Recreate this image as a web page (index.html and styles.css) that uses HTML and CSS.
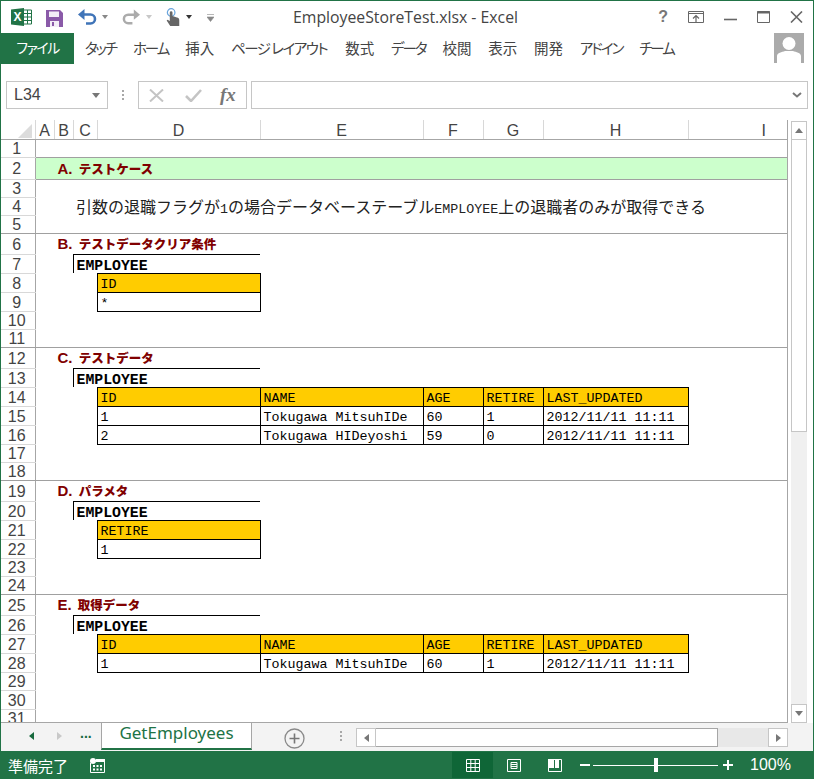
FILE: index.html
```html
<!DOCTYPE html>
<html lang="ja">
<head>
  <meta charset="UTF-8">
  <title>EmployeeStoreTest.xlsx - Excel</title>
  <link rel="stylesheet" href="styles.css">
</head>
<body>
<div class="window">

  <header class="titlebar">
    <div class="qat">
      <svg class="ic-excel" width="21" height="18" viewBox="0 0 21 18">
        <path d="M12 2h8.500v14H12z" fill="#fff" stroke="#217346"/>
        <path d="M13 5.500h7M13 9h7M13 12.500h7M16.500 2v14" stroke="#217346"/>
        <path d="M0 1.500 13 0v18L0 16.500z" fill="#217346"/>
        <text x="2.500" y="13" class="ic-excel-x">X</text>
      </svg>
      <svg class="ic-save" width="17" height="17" viewBox="0 0 17 17">
        <path d="M0 0h14l3 3v14H0z" fill="#8a5aa8"/>
        <path d="M3 1.500h10v5.500H3z" fill="#f2edf6"/>
        <path d="M4 11h9v6H4z" fill="#f2edf6"/>
        <path d="M6 12h2v4H6z" fill="#8a5aa8"/>
      </svg>
      <svg class="ic-undo" width="19" height="17" viewBox="0 0 19 17">
        <path d="M6 5.500h6.500a4.500 4.500 0 0 1 0 9H8" fill="none" stroke="#3f74b8" stroke-width="2.600"/>
        <path d="M0 5.500 6.500 0v11z" fill="#3f74b8"/>
      </svg>
      <span class="caret"></span>
      <svg class="ic-redo" width="18" height="17" viewBox="0 0 19 17">
        <path d="M13 5.500H6.500a4.500 4.500 0 0 0 0 9H11" fill="none" stroke="#ababab" stroke-width="2.600"/>
        <path d="M19 5.500 12.500 0v11z" fill="#ababab"/>
      </svg>
      <span class="caret caret-light"></span>
      <svg class="ic-touch" width="15" height="18" viewBox="0 0 15 20">
        <circle cx="6" cy="5" r="4.200" fill="none" stroke="#6aa5dc" stroke-width="1.400"/>
        <path d="M4.500 5a1.500 1.500 0 0 1 3 0v4l5 1.500c1.500.5 2.500 1 2.500 3V20H5l-4-6 1-1 2.500 1.500z" fill="#666"/>
      </svg>
      <span class="caret caret-dark"></span>
      <svg class="ic-more" width="7" height="8" viewBox="0 0 7 8">
        <path d="M0 .5h7M0 3h7L3.500 7.500z" fill="#888" stroke="#888" stroke-width=".6"/>
      </svg>
    </div>
    <div class="title">EmployeeStoreTest.xlsx - Excel</div>
    <div class="controls">
      <span class="help">?</span>
      <svg width="16" height="12" viewBox="0 0 16 12">
        <path d="M.5.500h15v11H.5z" fill="none" stroke="#666"/>
        <path d="M0 2.500h16M8 11V5M5 7.500 8 4.500l3 3" fill="none" stroke="#666" stroke-width="1.200"/>
      </svg>
      <svg width="13" height="12" viewBox="0 0 13 12"><path d="M0 8.500h13" stroke="#666" stroke-width="1.600"/></svg>
      <svg width="13" height="12" viewBox="0 0 13 12">
        <path d="M.5.500h12v11H.5z" fill="none" stroke="#666"/>
        <path d="M0 1.500h13" stroke="#666" stroke-width="2"/>
      </svg>
      <svg width="13" height="12" viewBox="0 0 13 12"><path d="M1 .5 12 11.500M12 .5 1 11.500" stroke="#666" stroke-width="1.600"/></svg>
    </div>
  </header>

  <nav class="ribbon">
    <a class="file-tab">ファイル</a>
    <a class="kana">タッチ</a>
    <a class="kana">ホーム</a>
    <a>挿入</a>
    <a class="kana-wide">ページ レイアウト</a>
    <a>数式</a>
    <a class="kana">データ</a>
    <a>校閲</a>
    <a>表示</a>
    <a>開発</a>
    <a class="kana">アドイン</a>
    <a class="kana">チーム</a>
    <svg class="avatar" width="30" height="30" viewBox="0 0 30 30">
      <path d="M0 0h30v30H0z" fill="#ababab"/>
      <circle cx="15" cy="10.500" r="6.500" fill="#fff"/>
      <path d="M3 30v-7c0-3 5-4 8-5h8c3 1 8 2 8 5v7z" fill="#fff"/>
    </svg>
  </nav>

  <div class="formula-bar">
    <div class="name-box"><span>L34</span><i class="tri-down"></i></div>
    <div class="grip"></div>
    <div class="fx-group">
      <svg width="15" height="13" viewBox="0 0 15 13"><path d="M1 .5 14 12.500M14 .5 1 12.500" stroke="#c4c4c4" stroke-width="2"/></svg>
      <svg width="17" height="13" viewBox="0 0 17 13"><path d="M1 7l5 5L16 1" fill="none" stroke="#c4c4c4" stroke-width="2.600"/></svg>
      <span class="fx">fx</span>
    </div>
    <div class="formula-input">
      <svg width="10" height="6" viewBox="0 0 10 6"><path d="M1 1l4 3.500L9 1" fill="none" stroke="#777" stroke-width="2"/></svg>
    </div>
  </div>

  <main class="sheet-area">
    <div class="grid-wrap">
      <table class="grid">
        <colgroup>
          <col class="c-head"><col class="c-a"><col class="c-b"><col class="c-c"><col class="c-d">
          <col class="c-e"><col class="c-f"><col class="c-g"><col class="c-h"><col class="c-i">
        </colgroup>
        <thead>
          <tr class="col-heads">
            <th class="corner"><i></i></th>
            <th>A</th><th>B</th><th>C</th><th>D</th><th>E</th><th>F</th><th>G</th><th>H</th><th class="col-i">I</th>
          </tr>
        </thead>
        <tbody>
          <tr class="h18"><th>1</th><td colspan="9"></td></tr>
          <tr class="h22"><th>2</th><td colspan="9" class="case-head"><span class="sec-title">A. <b>テストケース</b></span></td></tr>
          <tr class="h18"><th>3</th><td colspan="9"></td></tr>
          <tr class="h18"><th>4</th><td colspan="2"></td><td colspan="7" class="case-text">引数の退職フラグが<span class="mono">1</span>の場合データベーステーブル<span class="mono">EMPLOYEE</span>上の退職者のみが取得できる</td></tr>
          <tr class="h18 sec-end"><th>5</th><td colspan="9"></td></tr>

          <tr class="h21"><th>6</th><td colspan="9"><span class="sec-title">B. <b>テストデータクリア条件</b></span></td></tr>
          <tr class="h19"><th>7</th><td colspan="2"></td><td colspan="2" class="tbl-name">EMPLOYEE</td><td colspan="5"></td></tr>
          <tr class="h19"><th>8</th><td colspan="3"></td><td class="cell hd">ID</td><td colspan="5"></td></tr>
          <tr class="h19"><th>9</th><td colspan="3"></td><td class="cell">*</td><td colspan="5"></td></tr>
          <tr class="h18"><th>10</th><td colspan="9"></td></tr>
          <tr class="h18 sec-end"><th>11</th><td colspan="9"></td></tr>

          <tr class="h21"><th>12</th><td colspan="9"><span class="sec-title">C. <b>テストデータ</b></span></td></tr>
          <tr class="h19"><th>13</th><td colspan="2"></td><td colspan="2" class="tbl-name">EMPLOYEE</td><td colspan="5"></td></tr>
          <tr class="h19"><th>14</th><td colspan="3"></td><td class="cell hd">ID</td><td class="cell hd">NAME</td><td class="cell hd">AGE</td><td class="cell hd">RETIRE</td><td class="cell hd">LAST_UPDATED</td><td></td></tr>
          <tr class="h19"><th>15</th><td colspan="3"></td><td class="cell">1</td><td class="cell">Tokugawa MitsuhIDe</td><td class="cell">60</td><td class="cell">1</td><td class="cell">2012/11/11 11:11</td><td></td></tr>
          <tr class="h19"><th>16</th><td colspan="3"></td><td class="cell">2</td><td class="cell">Tokugawa HIDeyoshi</td><td class="cell">59</td><td class="cell">0</td><td class="cell">2012/11/11 11:11</td><td></td></tr>
          <tr class="h18"><th>17</th><td colspan="9"></td></tr>
          <tr class="h18 sec-end"><th>18</th><td colspan="9"></td></tr>

          <tr class="h21"><th>19</th><td colspan="9"><span class="sec-title">D. <b>パラメタ</b></span></td></tr>
          <tr class="h19"><th>20</th><td colspan="2"></td><td colspan="2" class="tbl-name">EMPLOYEE</td><td colspan="5"></td></tr>
          <tr class="h19"><th>21</th><td colspan="3"></td><td class="cell hd">RETIRE</td><td colspan="5"></td></tr>
          <tr class="h19"><th>22</th><td colspan="3"></td><td class="cell">1</td><td colspan="5"></td></tr>
          <tr class="h18"><th>23</th><td colspan="9"></td></tr>
          <tr class="h18 sec-end"><th>24</th><td colspan="9"></td></tr>

          <tr class="h21"><th>25</th><td colspan="9"><span class="sec-title">E. <b>取得データ</b></span></td></tr>
          <tr class="h19"><th>26</th><td colspan="2"></td><td colspan="2" class="tbl-name">EMPLOYEE</td><td colspan="5"></td></tr>
          <tr class="h19"><th>27</th><td colspan="3"></td><td class="cell hd">ID</td><td class="cell hd">NAME</td><td class="cell hd">AGE</td><td class="cell hd">RETIRE</td><td class="cell hd">LAST_UPDATED</td><td></td></tr>
          <tr class="h19"><th>28</th><td colspan="3"></td><td class="cell">1</td><td class="cell">Tokugawa MitsuhIDe</td><td class="cell">60</td><td class="cell">1</td><td class="cell">2012/11/11 11:11</td><td></td></tr>
          <tr class="h18"><th>29</th><td colspan="9"></td></tr>
          <tr class="h19"><th>30</th><td colspan="9"></td></tr>
          <tr class="h18"><th>31</th><td colspan="9"></td></tr>
        </tbody>
      </table>
    </div>
    <div class="vscroll">
      <div class="sb-btn"><i class="tri-up"></i></div>
      <div class="sb-thumb"></div>
      <div class="sb-track"></div>
      <div class="sb-btn"><i class="tri-down"></i></div>
    </div>
  </main>

  <div class="tabs-bar">
    <div class="tab-nav">
      <i class="arrow-left green"></i>
      <i class="arrow-right pale"></i>
      <span class="tab-dots">...</span>
    </div>
    <div class="sheet-tab">GetEmployees</div>
    <div class="add-sheet">
      <svg width="21" height="21" viewBox="0 0 21 21">
        <circle cx="10.500" cy="10.500" r="9.500" fill="none" stroke="#8a8a8a" stroke-width="1.300"/>
        <path d="M10.500 5.500v10M5.500 10.500h10" stroke="#777" stroke-width="1.600"/>
      </svg>
    </div>
    <div class="grip tabs-grip"></div>
    <div class="hscroll">
      <div class="hs-btn"><i class="arrow-left"></i></div>
      <div class="hs-thumb"></div>
      <div class="hs-track"></div>
      <div class="hs-btn"><i class="arrow-right"></i></div>
    </div>
  </div>

  <footer class="statusbar">
    <span class="ready">準備完了</span>
    <svg class="ic-macro" width="15" height="15" viewBox="0 0 15 15">
      <path d="M2.500 2.500H14.500V14.500H.5V5" fill="none" stroke="#fff"/>
      <circle cx="3" cy="3" r="3" fill="#fff"/>
      <path d="M6 1h9v3H6zM3 7h2v2H3zM6.500 7h2v2h-2zM10 7h2v2h-2zM3 10.500h2v2H3zM6.500 10.500h2v2h-2zM10 10.500h2v2h-2z" fill="#fff"/>
    </svg>
    <div class="views">
      <div class="view active">
        <svg width="14" height="13" viewBox="0 0 14 13"><path d="M.5.500h13v12H.5zM.5 4.500h13M.5 8.500h13M4.800.5v12M9.200.5v12" fill="none" stroke="#fff"/></svg>
      </div>
      <div class="view">
        <svg width="14" height="13" viewBox="0 0 14 13"><path d="M.5.500h13v12H.5zM4 3.500h6v6H4zM4 5.500h6M4 7.500h6" fill="none" stroke="#fff"/></svg>
      </div>
      <div class="view">
        <svg width="14" height="13" viewBox="0 0 14 13"><path d="M.5.500h13v12H.5z" fill="none" stroke="#fff"/><path d="M0 0h6v9H0zM7 0h4v9H7z" fill="#fff"/></svg>
      </div>
    </div>
    <div class="zoom">
      <span class="zoom-btn minus"></span>
      <div class="slider"><i></i></div>
      <span class="zoom-btn plus"></span>
      <span class="zoom-val">100%</span>
    </div>
  </footer>

</div>
</body>
</html>
```

FILE: styles.css
```css
* {
  box-sizing: border-box;
}
html, body {
  margin: 0;
  padding: 0;
  background: #fff;
}
body {
  font-family: "Noto Sans", "Noto Sans CJK JP", sans-serif;
  color: #444;
}
.window {
  width: 814px;
  height: 779px;
  border: 1px solid #217346;
  border-bottom: none;
  display: flex;
  flex-direction: column;
  overflow: hidden;
}

/* title bar */
.titlebar {
  height: 32px;
  display: flex;
  align-items: center;
  flex: none;
}
.qat, .controls {
  flex: 1 1 0;
  display: flex;
  align-items: center;
}
.qat {
  padding-left: 10px;
}
.ic-save { margin-left: 14px; margin-top: 2px; }
.ic-undo { margin-left: 15px; }
.ic-redo { margin-left: 14px; }
.ic-touch { margin-left: 13px; margin-top: -1px; }
.ic-more { margin-left: 15px; margin-top: 2px; }
.ic-excel-x {
  font: bold 12px "Liberation Sans", sans-serif;
  fill: #fff;
}
.caret {
  width: 0;
  height: 0;
  margin-left: 5px;
  border: 3.500px solid transparent;
  border-top: 4px solid #888;
  border-bottom: none;
}
.caret-light { border-top-color: #c8c8c8; margin-left: 6px; }
.caret-dark { border-top-color: #333; margin-left: 6px; }
.title {
  font-family: "Open Sans", sans-serif;
  font-size: 15.800px;
  color: #444;
  white-space: nowrap;
  flex: none;
  margin-left: -3px;
}
.controls {
  justify-content: flex-end;
  gap: 20px;
  padding-right: 10px;
}
.help {
  font: bold 16px "Liberation Sans", sans-serif;
  color: #777;
}

/* ribbon tabs */
.ribbon {
  height: 31px;
  flex: none;
  display: flex;
  align-items: center;
  gap: 16.800px;
  position: relative;
  font-family: "Noto Sans CJK JP", sans-serif;
  font-size: 14.500px;
  font-feature-settings: "palt";
  color: #444;
}
.ribbon a {
  white-space: nowrap;
  margin-top: -2px;
}
.ribbon .kana {
  letter-spacing: -2px;
}
.ribbon .kana-wide {
  letter-spacing: -1.500px;
  margin-right: 1.500px;
}
.ribbon .file-tab {
  width: 73px;
  height: 31px;
  line-height: 29px;
  margin-top: 0;
  margin-right: -6px;
  text-align: center;
  letter-spacing: -1.500px;
  background: #217346;
  color: #fff;
  font-size: 14px;
}
.avatar {
  position: absolute;
  right: 9px;
  top: 0;
}

/* formula bar */
.formula-bar {
  height: 28px;
  margin: 17px 0 11px 5px;
  flex: none;
  display: flex;
  align-items: stretch;
}
.name-box {
  width: 102px;
  border: 1px solid #c6c6c6;
  display: flex;
  align-items: center;
  justify-content: space-between;
  padding: 0 7px 0 7px;
  font-family: "Liberation Sans", sans-serif;
  font-size: 16px;
  color: #444;
}
.grip {
  width: 2px;
  margin: 0 14px;
  align-self: center;
  height: 10px;
  background: repeating-linear-gradient(#a8a8a8 0 2px, transparent 2px 4px);
}
.fx-group {
  width: 109px;
  border: 1px solid #c6c6c6;
  display: flex;
  align-items: center;
  padding-left: 10px;
  gap: 21px;
}
.fx {
  font: italic bold 19px "Liberation Serif", serif;
  color: #777;
  margin-left: -3px;
}
.formula-input {
  width: 557px;
  margin-left: 4px;
  border: 1px solid #c6c6c6;
  display: flex;
  align-items: center;
  justify-content: flex-end;
  padding-right: 5px;
}

/* sheet */
.sheet-area {
  height: 603px;
  flex: none;
  display: flex;
}
.grid-wrap {
  width: 787px;
  height: 603px;
  overflow: hidden;
  border-right: 1px solid #a6a6a6;
  border-bottom: 1px solid #a6a6a6;
  flex: none;
}
.grid {
  width: 786px;
  table-layout: fixed;
  border-collapse: collapse;
  color: #000;
}
.c-head { width: 34px; }
.c-a, .c-b { width: 19px; }
.c-c { width: 24px; }
.c-d, .c-e { width: 163px; }
.c-f, .c-g { width: 60px; }
.c-h { width: 145px; }
.c-i { width: 99px; }

.grid th {
  font-family: "Liberation Sans", sans-serif;
  font-weight: normal;
  font-size: 16px;
  line-height: 14px;
  color: #444;
  padding: 0;
  text-align: center;
}
.grid tbody th {
  border-right: 1px solid #a6a6a6;
  border-bottom: 1px solid #d8d8d8;
  padding: 2px 2px 0 0;
}
.grid td {
  padding: 0;
  line-height: 14px;
  white-space: nowrap;
}
.col-heads {
  height: 19px;
}
.grid .col-heads th {
  border-right: 1px solid #d8d8d8;
  border-bottom: 1px solid #a6a6a6;
  padding-top: 3px;
}
.grid .col-heads .col-i {
  border-right: none;
  padding-left: 52px;
}
.corner {
  position: relative;
}
.corner i {
  position: absolute;
  right: 3px;
  bottom: 1px;
  width: 0;
  height: 0;
  border-left: 14px solid transparent;
  border-bottom: 14px solid #dcdcdc;
}
.h18 { height: 18px; }
.h19 { height: 19px; }
.h21 { height: 21px; }
.h22 { height: 22px; }
.grid .sec-end td, .grid .sec-end th {
  border-bottom: 1px solid #a0a0a0;
}
.case-head {
  background: #ccffcc;
  border-top: 1px solid #a0a0a0;
  border-bottom: 1px solid #a0a0a0;
}
.sec-title {
  font-family: "Liberation Sans", "Noto Sans CJK JP", sans-serif;
  font-weight: bold;
  font-size: 15px;
  color: #800000;
  padding-left: 22px;
}
.sec-title b {
  font-family: "Noto Sans CJK JP", sans-serif;
  font-size: 12.500px;
  margin-left: 2px;
}
.grid .case-text {
  font-family: "Noto Sans CJK JP", sans-serif;
  font-size: 16px;
  line-height: 10px;
  color: #222;
  padding: 0 0 0 3px;
}
.mono {
  font-family: "Liberation Mono", monospace;
  font-size: 13.330px;
  line-height: 0;
}
.grid .tbl-name {
  font-family: "Liberation Mono", monospace;
  font-weight: bold;
  font-size: 14.800px;
  line-height: 12px;
  border-top: 1px solid #000;
  border-left: 1px solid #000;
  padding: 5px 0 0 3px;
}
.grid .cell {
  font-family: "Liberation Mono", monospace;
  font-size: 13.330px;
  line-height: 12px;
  border: 1px solid #000;
  padding: 5px 0 0 3px;
}
.hd {
  background: #ffcc00;
}

/* vertical scrollbar */
.vscroll {
  width: 22px;
  padding: 1px 3px 0 3px;
  background: #fff;
  display: flex;
  flex-direction: column;
}
.sb-btn {
  height: 19px;
  flex: none;
  border: 1px solid #c6c6c6;
  display: flex;
  align-items: center;
  justify-content: center;
}
.sb-thumb {
  height: 292px;
  flex: none;
  border: 1px solid #c6c6c6;
  border-top: none;
  background: #fff;
}
.sb-track {
  flex: 1;
  background: #f0f0f0;
}
.tri-up, .tri-down {
  display: block;
  width: 0;
  height: 0;
  border-left: 4.500px solid transparent;
  border-right: 4.500px solid transparent;
}
.tri-up { border-bottom: 5px solid #777; }
.tri-down { border-top: 5px solid #777; }

/* sheet tabs */
.tabs-bar {
  height: 28px;
  flex: none;
  display: flex;
  background: #f3f3f3;
  position: relative;
}
.tab-nav {
  width: 100px;
  display: flex;
  align-items: center;
  padding-left: 28px;
  padding-bottom: 2px;
}
.arrow-left, .arrow-right {
  display: block;
  width: 0;
  height: 0;
  border-top: 4.500px solid transparent;
  border-bottom: 4.500px solid transparent;
}
.arrow-left { border-right: 5px solid #777; }
.arrow-right { border-left: 5px solid #777; }
.arrow-left.green { border-right-color: #17693d; }
.arrow-right.pale { border-left-color: #c8c8c8; margin-left: 23px; }
.tab-dots {
  margin-left: 18px;
  font: bold 14px "Liberation Sans", sans-serif;
  color: #17693d;
  margin-top: -6px;
}
.sheet-tab {
  width: 151px;
  height: 27px;
  background: #fff;
  border-left: 1px solid #a6a6a6;
  border-right: 1px solid #a6a6a6;
  border-bottom: 2px solid #217346;
  font-size: 17px;
  line-height: 20px;
  text-align: center;
  color: #217346;
}
.add-sheet {
  margin-left: 32px;
  padding-top: 5px;
}
.tabs-grip {
  margin: 0 0 2px 35px;
}
.hscroll {
  display: flex;
  margin-left: 14px;
  height: 19px;
  margin-top: 5px;
}
.hs-btn {
  width: 20px;
  border: 1px solid #c6c6c6;
  background: #fff;
  display: flex;
  align-items: center;
  justify-content: center;
}
.hs-thumb {
  width: 342px;
  background: #fff;
  border: 1px solid #a6a6a6;
  border-left: none;
}
.hs-track {
  width: 50px;
  background: #e8e8e8;
}

/* status bar */
.statusbar {
  height: 28px;
  flex: none;
  background: #217346;
  color: #fff;
  margin: 0 -1px;
  display: flex;
  align-items: center;
  position: relative;
}
.ready {
  font-family: "Noto Sans CJK JP", sans-serif;
  font-size: 15px;
  margin-left: 8px;
}
.ic-macro {
  margin-left: 22px;
}
.views {
  display: flex;
  margin-left: 347px;
  height: 26px;
}
.view {
  width: 41px;
  display: flex;
  align-items: center;
  justify-content: center;
}
.view.active {
  background: #0f6637;
}
.zoom {
  display: flex;
  align-items: center;
  margin-left: 5px;
}
.zoom-btn {
  position: relative;
  width: 10px;
  height: 10px;
}
.zoom-btn::before {
  content: "";
  position: absolute;
  left: 0;
  right: 0;
  top: 4px;
  height: 2px;
  background: #fff;
}
.plus::after {
  content: "";
  position: absolute;
  top: 0;
  bottom: 0;
  left: 4px;
  width: 2px;
  background: #fff;
}
.slider {
  width: 125px;
  height: 1px;
  margin: 0 5px 0 3px;
  background: #fff;
  position: relative;
}
.slider i {
  position: absolute;
  left: 61px;
  top: -7px;
  width: 4px;
  height: 14px;
  background: #fff;
}
.zoom-val {
  font-family: "Liberation Sans", sans-serif;
  font-size: 16px;
  margin-left: 17px;
}
```
